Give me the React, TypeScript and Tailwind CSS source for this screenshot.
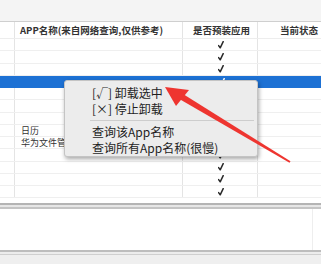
import React from "react";

const rows = [
	{ name: "", pre: true },
	{ name: "", pre: true },
	{ name: "", pre: true },
	{ name: "", pre: true, selected: true },
	{ name: "", pre: false },
	{ name: "", pre: false },
	{ name: "", pre: false },
	{ name: "日历", pre: false },
	{ name: "华为文件管理", pre: false },
	{ name: "", pre: true },
	{ name: "", pre: true },
	{ name: "", pre: true },
	{ name: "", pre: true },
];

const tableFont = { fontFamily: '"Noto Sans CJK SC", "Liberation Sans", sans-serif' };

function Check({ color }: { color: string }) {
	return (
		<svg width="6" height="8" viewBox="0 0 6 8" className="block">
			<path d="M0.6 4.6 L2.2 6.8 L5.2 0.6" fill="none" stroke={color} strokeWidth="1.5" strokeLinecap="round" strokeLinejoin="round" />
		</svg>
	);
}

function ContextMenu() {
	return (
		<div
			className="absolute left-[64px] top-[80px] w-[194px] h-[77px] bg-[#ececec] border border-[#c4c4c4] rounded-[3px] shadow-[1px_2px_4px_rgba(0,0,0,0.35)] pt-[4px] text-[12px] leading-[16px] text-[#1e1e1e]"
			style={tableFont}
		>
			<div className="pl-[27px]">[√] 卸载选中</div>
			<div className="pl-[27px]">[×] 停止卸载</div>
			<div className="h-[7px] flex items-center ml-[25px] mr-[3px]">
				<div className="h-px w-full bg-[#cdcdcd]" />
			</div>
			<div className="pl-[27px]">查询该App名称</div>
			<div className="pl-[27px]">查询所有App名称(很慢)</div>
		</div>
	);
}

export default function App() {
	return (
		<div className="relative w-[321px] h-[264px] overflow-hidden bg-white" style={tableFont}>
			<div className="h-[22px] bg-[#f4f4f4] border-b border-[#cfcfcf]" />

			<div className="grid grid-cols-[15px_168px_75px_1fr] h-[17px] text-[9.5px] font-semibold text-[#333] border-b border-[#ededed]">
				<div className="border-r border-[#e4e4e4]" />
				<div className="border-r border-[#e4e4e4] pl-[5px] flex items-center">APP名称(来自网络查询,仅供参考)</div>
				<div className="border-r border-[#e4e4e4] flex items-center justify-center pl-[3px]">是否预装应用</div>
				<div className="flex items-center pl-[22px]">当前状态</div>
			</div>

			<div className="h-[164px] overflow-hidden">
				{rows.map((r, i) => (
					<div
						key={i}
						className={
							r.selected
								? "grid grid-cols-[15px_168px_75px_1fr] h-[12.25px] text-[9px] bg-[#1d71d4] text-white"
								: "grid grid-cols-[15px_168px_75px_1fr] h-[12.25px] text-[9px] text-[#333] border-b border-[#efefef]"
						}
					>
						<div className={r.selected ? "" : "border-r border-[#e4e4e4]"} />
						<div className={r.selected ? "pl-[6px] leading-[12px]" : "border-r border-[#e4e4e4] pl-[6px] leading-[12px] whitespace-nowrap overflow-hidden"}>
							{r.name}
						</div>
						<div className={r.selected ? "flex items-center justify-center pl-[2px]" : "border-r border-[#e4e4e4] flex items-center justify-center pl-[2px]"}>
							{r.pre && <Check color={r.selected ? "#ffffff" : "#2a2a2a"} />}
						</div>
						<div />
					</div>
				))}
			</div>

			<div className="h-[6px] border-t-2 border-b-2 border-t-[#b4b4b4] border-b-[#c4c4c4] bg-[#e6e6e6]" />
			<div className="h-[41px] flex justify-end pr-[8px]">
				<div className="w-px h-full bg-[#eeeeee]" />
			</div>
			<div className="h-[5px] border-t-2 border-b border-t-[#bdbdbd] border-b-[#cfcfcf] bg-[#ececec]" />
			<div className="h-[9px] bg-[#efefef]" />

			<ContextMenu />

			<svg className="absolute inset-0 pointer-events-none" width="321" height="264" viewBox="0 0 321 264">
				<polygon points="165,87 189,90 176,106" fill="#ee3530" />
				<polygon points="180.2,99.6 183.8,94.4 290.5,161.3 289.5,162.7" fill="#ee3530" />
			</svg>
		</div>
	);
}
